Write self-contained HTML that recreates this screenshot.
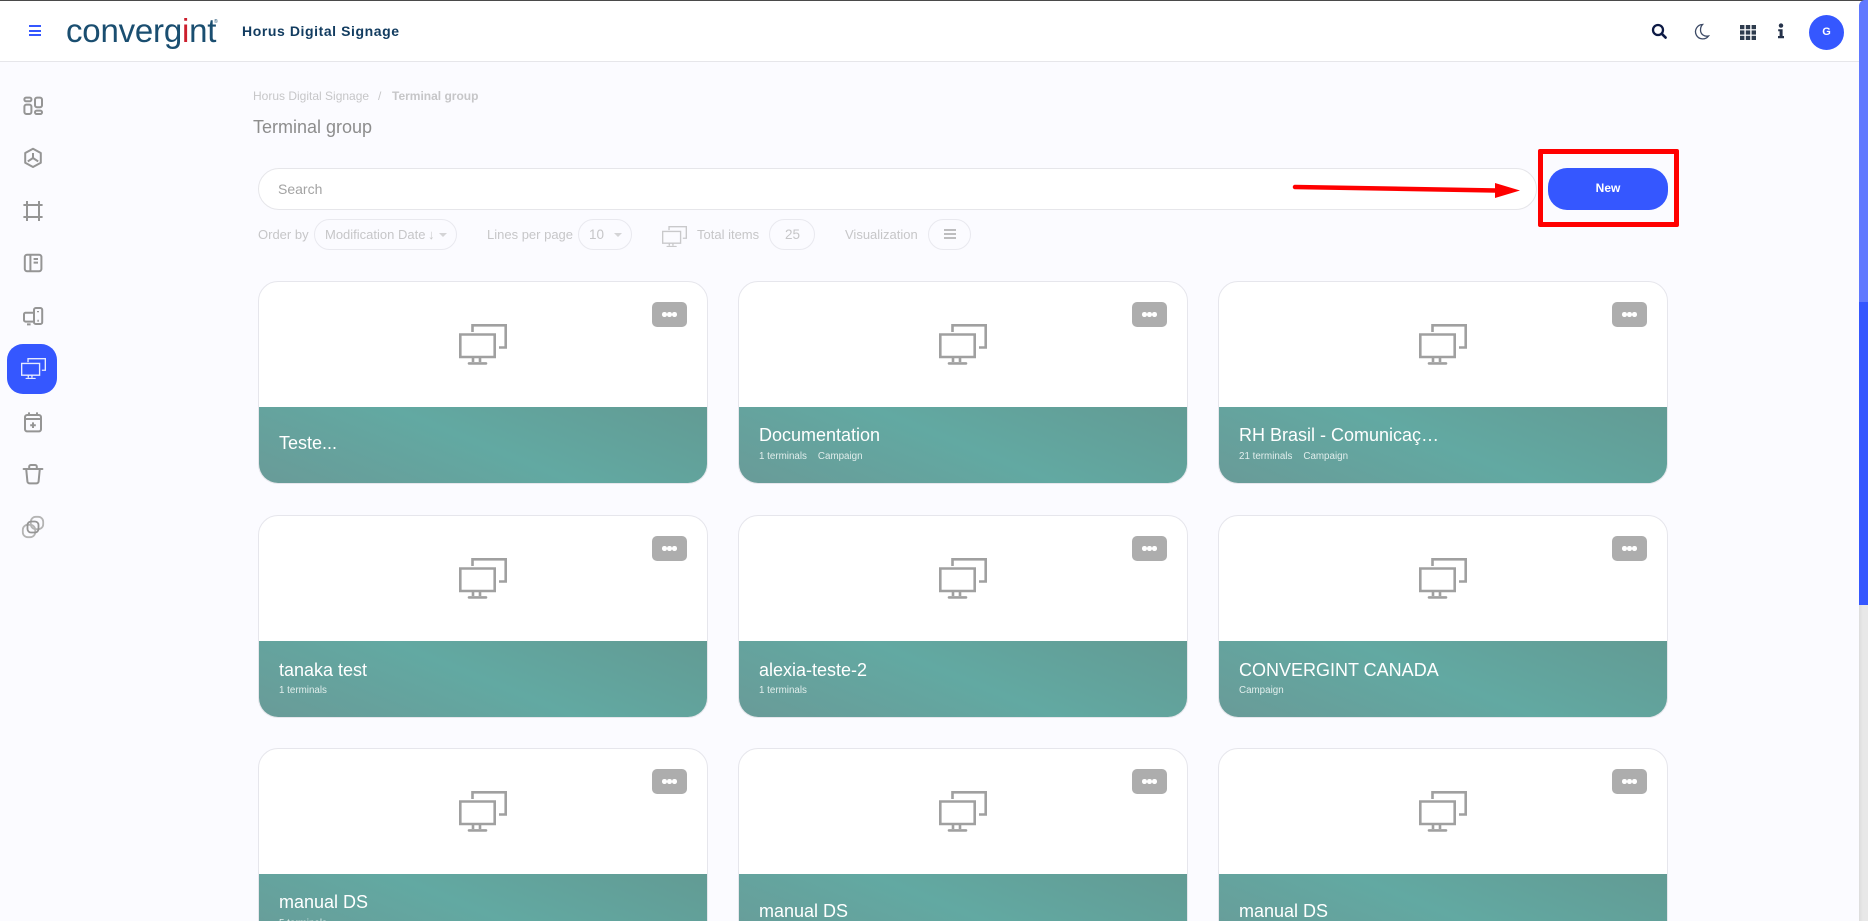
<!DOCTYPE html>
<html lang="en">
<head>
<meta charset="utf-8">
<title>Terminal group</title>
<style>
html,body{margin:0;padding:0;width:1868px;height:921px;overflow:hidden;background:#fbfbff;font-family:"Liberation Sans",sans-serif}
#page{position:relative;width:1868px;height:921px;overflow:hidden;background:#fbfbff}
.a{position:absolute}
.t{position:absolute;white-space:nowrap;line-height:1}
#hdr{position:absolute;left:0;top:0;width:1868px;height:61px;background:#fff;border-bottom:1px solid #e6e6ea;box-sizing:content-box}
#topline{position:absolute;left:0;top:0;width:1868px;height:1px;background:#4a4a4a}
.pill{position:absolute;box-sizing:border-box;height:31px;top:219px;border:1px solid #e9e9ef;border-radius:16px}
.lb{position:absolute;white-space:nowrap;line-height:1;font-size:13px;color:#c6c6c8;top:228px}
.card{position:absolute;width:450px;height:203px;box-sizing:border-box;background:#fff;border:1px solid #e6e6ec;border-radius:20px;overflow:hidden}
.teal{position:absolute;left:0;right:0;top:125px;bottom:0;background:linear-gradient(22deg,#699b98 0%,#62a9a2 50%,#629b94 100%)}
.btn{position:absolute;left:393px;top:20px;width:35px;height:25px;background:#adadad;border-radius:5px}
.btn i{position:absolute;top:10px;width:4.6px;height:4.6px;border-radius:50%;background:#fff}
.ic{position:absolute;left:200px;top:42px}
.nm{position:absolute;left:20px;top:18px;color:#fff;font-size:18px;line-height:20px;white-space:nowrap}
.nm.c{top:26px}
.r2 .nm{top:19px}
.sb{position:absolute;left:20px;top:44px;color:#e1eeec;font-size:9.8px;line-height:11px;white-space:nowrap}
.sb span{margin-left:11px}
</style>
</head>
<body>
<svg width="0" height="0" style="position:absolute">
<symbol id="mon" viewBox="0 0 48 41">
<path d="M13.5 8V1.3H46.7V23.5H40M1.3 10.5H35.7V33H1.3ZM14 33V38M21 33V38" fill="none" stroke="currentColor" stroke-width="2.6"/>
<path d="M10 39.4H27" fill="none" stroke="currentColor" stroke-width="2.6" stroke-linecap="round"/>
</symbol>
</svg>
<div id="page">
<div id="hdr"></div>
<div id="topline"></div>

<!-- hamburger -->
<div class="a" style="left:29px;top:25px;width:12px;height:2px;background:#3557ff"></div>
<div class="a" style="left:29px;top:30px;width:12px;height:2px;background:#3557ff"></div>
<div class="a" style="left:29px;top:34px;width:12px;height:2px;background:#3557ff"></div>

<!-- logo -->
<div class="t" style="left:66px;top:14px;font-size:33px;letter-spacing:-.2px;color:#1a4e70;line-height:34px">converg<span style="color:#cc1f2d">i</span>nt</div>
<div class="t" style="left:214px;top:20px;font-size:5px;color:#12466a">®</div>
<div class="t" style="left:242px;top:24px;font-size:14px;font-weight:bold;letter-spacing:.58px;color:#123c60">Horus Digital Signage</div>

<!-- header right icons -->
<svg class="a" style="left:1650px;top:22px" width="18" height="18" viewBox="0 0 18 18"><circle cx="8" cy="8" r="5" fill="none" stroke="#0d1a45" stroke-width="2.3"/><path d="M11.8 11.8L15.6 15.6" stroke="#0d1a45" stroke-width="2.6" stroke-linecap="round"/></svg>
<svg class="a" style="left:1693px;top:22px" width="18" height="18" viewBox="0 0 18 18"><path d="M9.5 2.5A7.2 7.2 0 1 0 15.5 14C11 15 7.5 12 7.5 8C7.5 6 8.2 3.8 9.5 2.5Z" fill="none" stroke="#3c4a66" stroke-width="1.3"/></svg>
<svg class="a" style="left:1740px;top:25px" width="16" height="15" viewBox="0 0 16 15" fill="#2e3c4e"><rect x="0" y="0" width="4.4" height="4.2"/><rect x="5.8" y="0" width="4.4" height="4.2"/><rect x="11.6" y="0" width="4.4" height="4.2"/><rect x="0" y="5.4" width="4.4" height="4.2"/><rect x="5.8" y="5.4" width="4.4" height="4.2"/><rect x="11.6" y="5.4" width="4.4" height="4.2"/><rect x="0" y="10.8" width="4.4" height="4.2"/><rect x="5.8" y="10.8" width="4.4" height="4.2"/><rect x="11.6" y="10.8" width="4.4" height="4.2"/></svg>
<svg class="a" style="left:1777px;top:23px" width="8" height="16" viewBox="0 0 8 16" fill="#25324a"><circle cx="4" cy="2.6" r="2.2"/><path d="M1.2 6.2H5.6V13H7V15.2H1V13H2.6V8.2H1.2Z"/></svg>
<div class="a" style="left:1809px;top:15px;width:35px;height:35px;border-radius:50%;background:#3557ff;color:#fff;font-size:11px;font-weight:bold;text-align:center;line-height:35px">G</div>

<!-- scrollbar -->
<div class="a" style="left:1859px;top:0;width:9px;height:302px;background:#6079ff;border-top-left-radius:6px"></div>
<div class="a" style="left:1859px;top:302px;width:9px;height:303px;background:#3557ff"></div>
<div class="a" style="left:1859px;top:605px;width:9px;height:316px;background:linear-gradient(to right,#dcdcdc,#e8e8e8 40%,#e8e8e8)"></div>

<!-- sidebar icons -->
<svg class="a" style="left:21px;top:94px" width="24" height="24" viewBox="0 0 24 24" fill="none" stroke="#959595" stroke-width="2"><rect x="3.4" y="3.6" width="7" height="3.6" rx="1.6"/><rect x="3.4" y="10.6" width="7" height="9.4" rx="2"/><rect x="14" y="3.6" width="7" height="9.6" rx="2"/><rect x="14" y="16.6" width="7" height="3.4" rx="1.6"/></svg>
<svg class="a" style="left:21px;top:146px" width="24" height="24" viewBox="0 0 24 24" fill="none" stroke="#959595" stroke-width="2"><path d="M12 2.8L19.8 7V16.8L12 21L4.2 16.8V7Z" stroke-linejoin="round"/><path d="M12 7V12M12 12L6.8 15.4M12 12L17.2 15.4"/></svg>
<svg class="a" style="left:21px;top:199px" width="24" height="24" viewBox="0 0 24 24" fill="none" stroke="#959595" stroke-width="2"><path d="M6 2V22M18 2V22M2.4 6H21.6M2.4 18H21.6"/></svg>
<svg class="a" style="left:21px;top:251px" width="24" height="24" viewBox="0 0 24 24" fill="none" stroke="#959595" stroke-width="2"><rect x="3.8" y="3.8" width="16.6" height="16.4" rx="2.2"/><path d="M9.4 3.8V20.2M12.6 8H17M12.6 11.6H17"/></svg>
<svg class="a" style="left:21px;top:304px" width="24" height="24" viewBox="0 0 24 24" fill="none" stroke="#959595" stroke-width="2"><path d="M12 8.7H4.4A1.8 1.8 0 0 0 3 10.5V15.8A1.8 1.8 0 0 0 4.4 17.6H12"/><rect x="13" y="4" width="8.2" height="16" rx="1.8"/><path d="M17 7V8.2M16.4 16.8H17.8M6 20.4H9.6"/></svg>
<div class="a" style="left:7px;top:344px;width:50px;height:50px;border-radius:16px;background:#3557ff"></div>
<svg class="a" style="left:21px;top:358px;color:#e6ebff" width="25" height="21.4"><use href="#mon"/></svg>
<svg class="a" style="left:21px;top:410px" width="24" height="24" viewBox="0 0 24 24" fill="none" stroke="#959595" stroke-width="2"><rect x="4" y="5" width="16" height="16.4" rx="2.2"/><path d="M8 2.4V5M16 2.4V5M4 9H20"/><path d="M12 12.4V18M9.2 15.2H14.8" stroke-width="2"/></svg>
<svg class="a" style="left:21px;top:462px" width="24" height="24" viewBox="0 0 24 24" fill="none" stroke="#959595" stroke-width="2"><path d="M2.6 7H21.4M8.2 7V4.6A1.6 1.6 0 0 1 9.8 3H14.2A1.6 1.6 0 0 1 15.8 4.6V7" stroke-linecap="round"/><path d="M5.2 7L6.4 19.4A2.4 2.4 0 0 0 8.8 21.4H15.2A2.4 2.4 0 0 0 17.6 19.4L18.8 7"/></svg>
<svg class="a" style="left:21px;top:515px" width="24" height="24" viewBox="0 0 24 24" fill="none" stroke-width="1.8"><rect x="1.8" y="9.8" width="12.4" height="12.4" rx="5" stroke="#b4b4b4"/><rect x="9.8" y="1.8" width="12.4" height="12.4" rx="5" stroke="#b4b4b4"/><rect x="6.5" y="6.5" width="11" height="11" rx="3.5" stroke="#959595"/></svg>

<!-- breadcrumb / title -->
<div class="t" style="left:253px;top:90px;font-size:12px;color:#c6c6c8">Horus Digital Signage</div>
<div class="t" style="left:378px;top:90px;font-size:12px;color:#c6c6c8">/</div>
<div class="t" style="left:392px;top:90px;font-size:12px;font-weight:bold;color:#c6c6c8">Terminal group</div>
<div class="t" style="left:253px;top:118px;font-size:18px;color:#8d8d8d">Terminal group</div>

<!-- search -->
<div class="a" style="left:258px;top:168px;width:1279px;height:42px;box-sizing:border-box;background:#fff;border:1px solid #e6e6ea;border-radius:21px"></div>
<div class="t" style="left:278px;top:182px;font-size:14px;color:#a3a3a3">Search</div>

<!-- new button + annotation -->
<div class="a" style="left:1548px;top:168px;width:120px;height:42px;background:#3557ff;border-radius:19px;color:#fff;font-size:12px;font-weight:bold;text-align:center;line-height:41px">New</div>
<div class="a" style="left:1538px;top:149px;width:141px;height:78px;box-sizing:border-box;border:5px solid #ff0000;border-radius:2px"></div>
<svg class="a" style="left:1290px;top:175px" width="240" height="30"><path d="M5 12L206 15.5" stroke="#ff0000" stroke-width="4.5" stroke-linecap="round"/><path d="M205 8L230 15.5L205 23Z" fill="#ff0000"/></svg>

<!-- filter row -->
<div class="lb" style="left:258px">Order by</div>
<div class="pill" style="left:314px;width:143px"></div>
<div class="lb" style="left:325px">Modification Date</div>
<div class="lb" style="left:428px">↓</div>
<div class="a" style="left:439px;top:233px;border-left:4px solid transparent;border-right:4px solid transparent;border-top:4px solid #d4d4d6"></div>
<div class="lb" style="left:487px">Lines per page</div>
<div class="pill" style="left:578px;width:54px"></div>
<div class="lb" style="left:589px;font-size:13.5px">10</div>
<div class="a" style="left:614px;top:233px;border-left:4px solid transparent;border-right:4px solid transparent;border-top:4px solid #d4d4d6"></div>
<svg class="a" style="left:662px;top:226px;color:#c9c9cb" width="25" height="21.4"><use href="#mon"/></svg>
<div class="lb" style="left:697px">Total items</div>
<div class="pill" style="left:769px;width:46px"></div>
<div class="lb" style="left:785px;font-size:13.5px">25</div>
<div class="lb" style="left:845px">Visualization</div>
<div class="pill" style="left:928px;width:43px"></div>
<div class="a" style="left:944px;top:229px;width:12px;height:2px;background:#bdbdbf"></div>
<div class="a" style="left:944px;top:233px;width:12px;height:2px;background:#bdbdbf"></div>
<div class="a" style="left:944px;top:237px;width:12px;height:2px;background:#bdbdbf"></div>

<!-- row 1 -->
<div class="card" style="left:258px;top:281px"><svg class="ic" width="48" height="41" style="color:#a0a0a0"><use href="#mon"/></svg><div class="btn"><i style="left:10px"></i><i style="left:15.2px"></i><i style="left:20.4px"></i></div><div class="teal"><div class="nm c">Teste...</div></div></div>
<div class="card" style="left:738px;top:281px"><svg class="ic" width="48" height="41" style="color:#a0a0a0"><use href="#mon"/></svg><div class="btn"><i style="left:10px"></i><i style="left:15.2px"></i><i style="left:20.4px"></i></div><div class="teal"><div class="nm">Documentation</div><div class="sb">1 terminals<span>Campaign</span></div></div></div>
<div class="card" style="left:1218px;top:281px"><svg class="ic" width="48" height="41" style="color:#a0a0a0"><use href="#mon"/></svg><div class="btn"><i style="left:10px"></i><i style="left:15.2px"></i><i style="left:20.4px"></i></div><div class="teal"><div class="nm">RH Brasil - Comunicaç…</div><div class="sb">21 terminals<span>Campaign</span></div></div></div>

<!-- row 2 -->
<div class="card r2" style="left:258px;top:515px"><svg class="ic" width="48" height="41" style="color:#a0a0a0"><use href="#mon"/></svg><div class="btn"><i style="left:10px"></i><i style="left:15.2px"></i><i style="left:20.4px"></i></div><div class="teal"><div class="nm">tanaka test</div><div class="sb">1 terminals</div></div></div>
<div class="card r2" style="left:738px;top:515px"><svg class="ic" width="48" height="41" style="color:#a0a0a0"><use href="#mon"/></svg><div class="btn"><i style="left:10px"></i><i style="left:15.2px"></i><i style="left:20.4px"></i></div><div class="teal"><div class="nm">alexia-teste-2</div><div class="sb">1 terminals</div></div></div>
<div class="card r2" style="left:1218px;top:515px"><svg class="ic" width="48" height="41" style="color:#a0a0a0"><use href="#mon"/></svg><div class="btn"><i style="left:10px"></i><i style="left:15.2px"></i><i style="left:20.4px"></i></div><div class="teal"><div class="nm">CONVERGINT CANADA</div><div class="sb">Campaign</div></div></div>

<!-- row 3 -->
<div class="card" style="left:258px;top:748px"><svg class="ic" width="48" height="41" style="color:#a0a0a0"><use href="#mon"/></svg><div class="btn"><i style="left:10px"></i><i style="left:15.2px"></i><i style="left:20.4px"></i></div><div class="teal"><div class="nm">manual DS</div><div class="sb">5 terminals</div></div></div>
<div class="card" style="left:738px;top:748px"><svg class="ic" width="48" height="41" style="color:#a0a0a0"><use href="#mon"/></svg><div class="btn"><i style="left:10px"></i><i style="left:15.2px"></i><i style="left:20.4px"></i></div><div class="teal"><div class="nm c" style="top:27px">manual DS</div></div></div>
<div class="card" style="left:1218px;top:748px"><svg class="ic" width="48" height="41" style="color:#a0a0a0"><use href="#mon"/></svg><div class="btn"><i style="left:10px"></i><i style="left:15.2px"></i><i style="left:20.4px"></i></div><div class="teal"><div class="nm c" style="top:27px">manual DS</div></div></div>
</div>
</body>
</html>
